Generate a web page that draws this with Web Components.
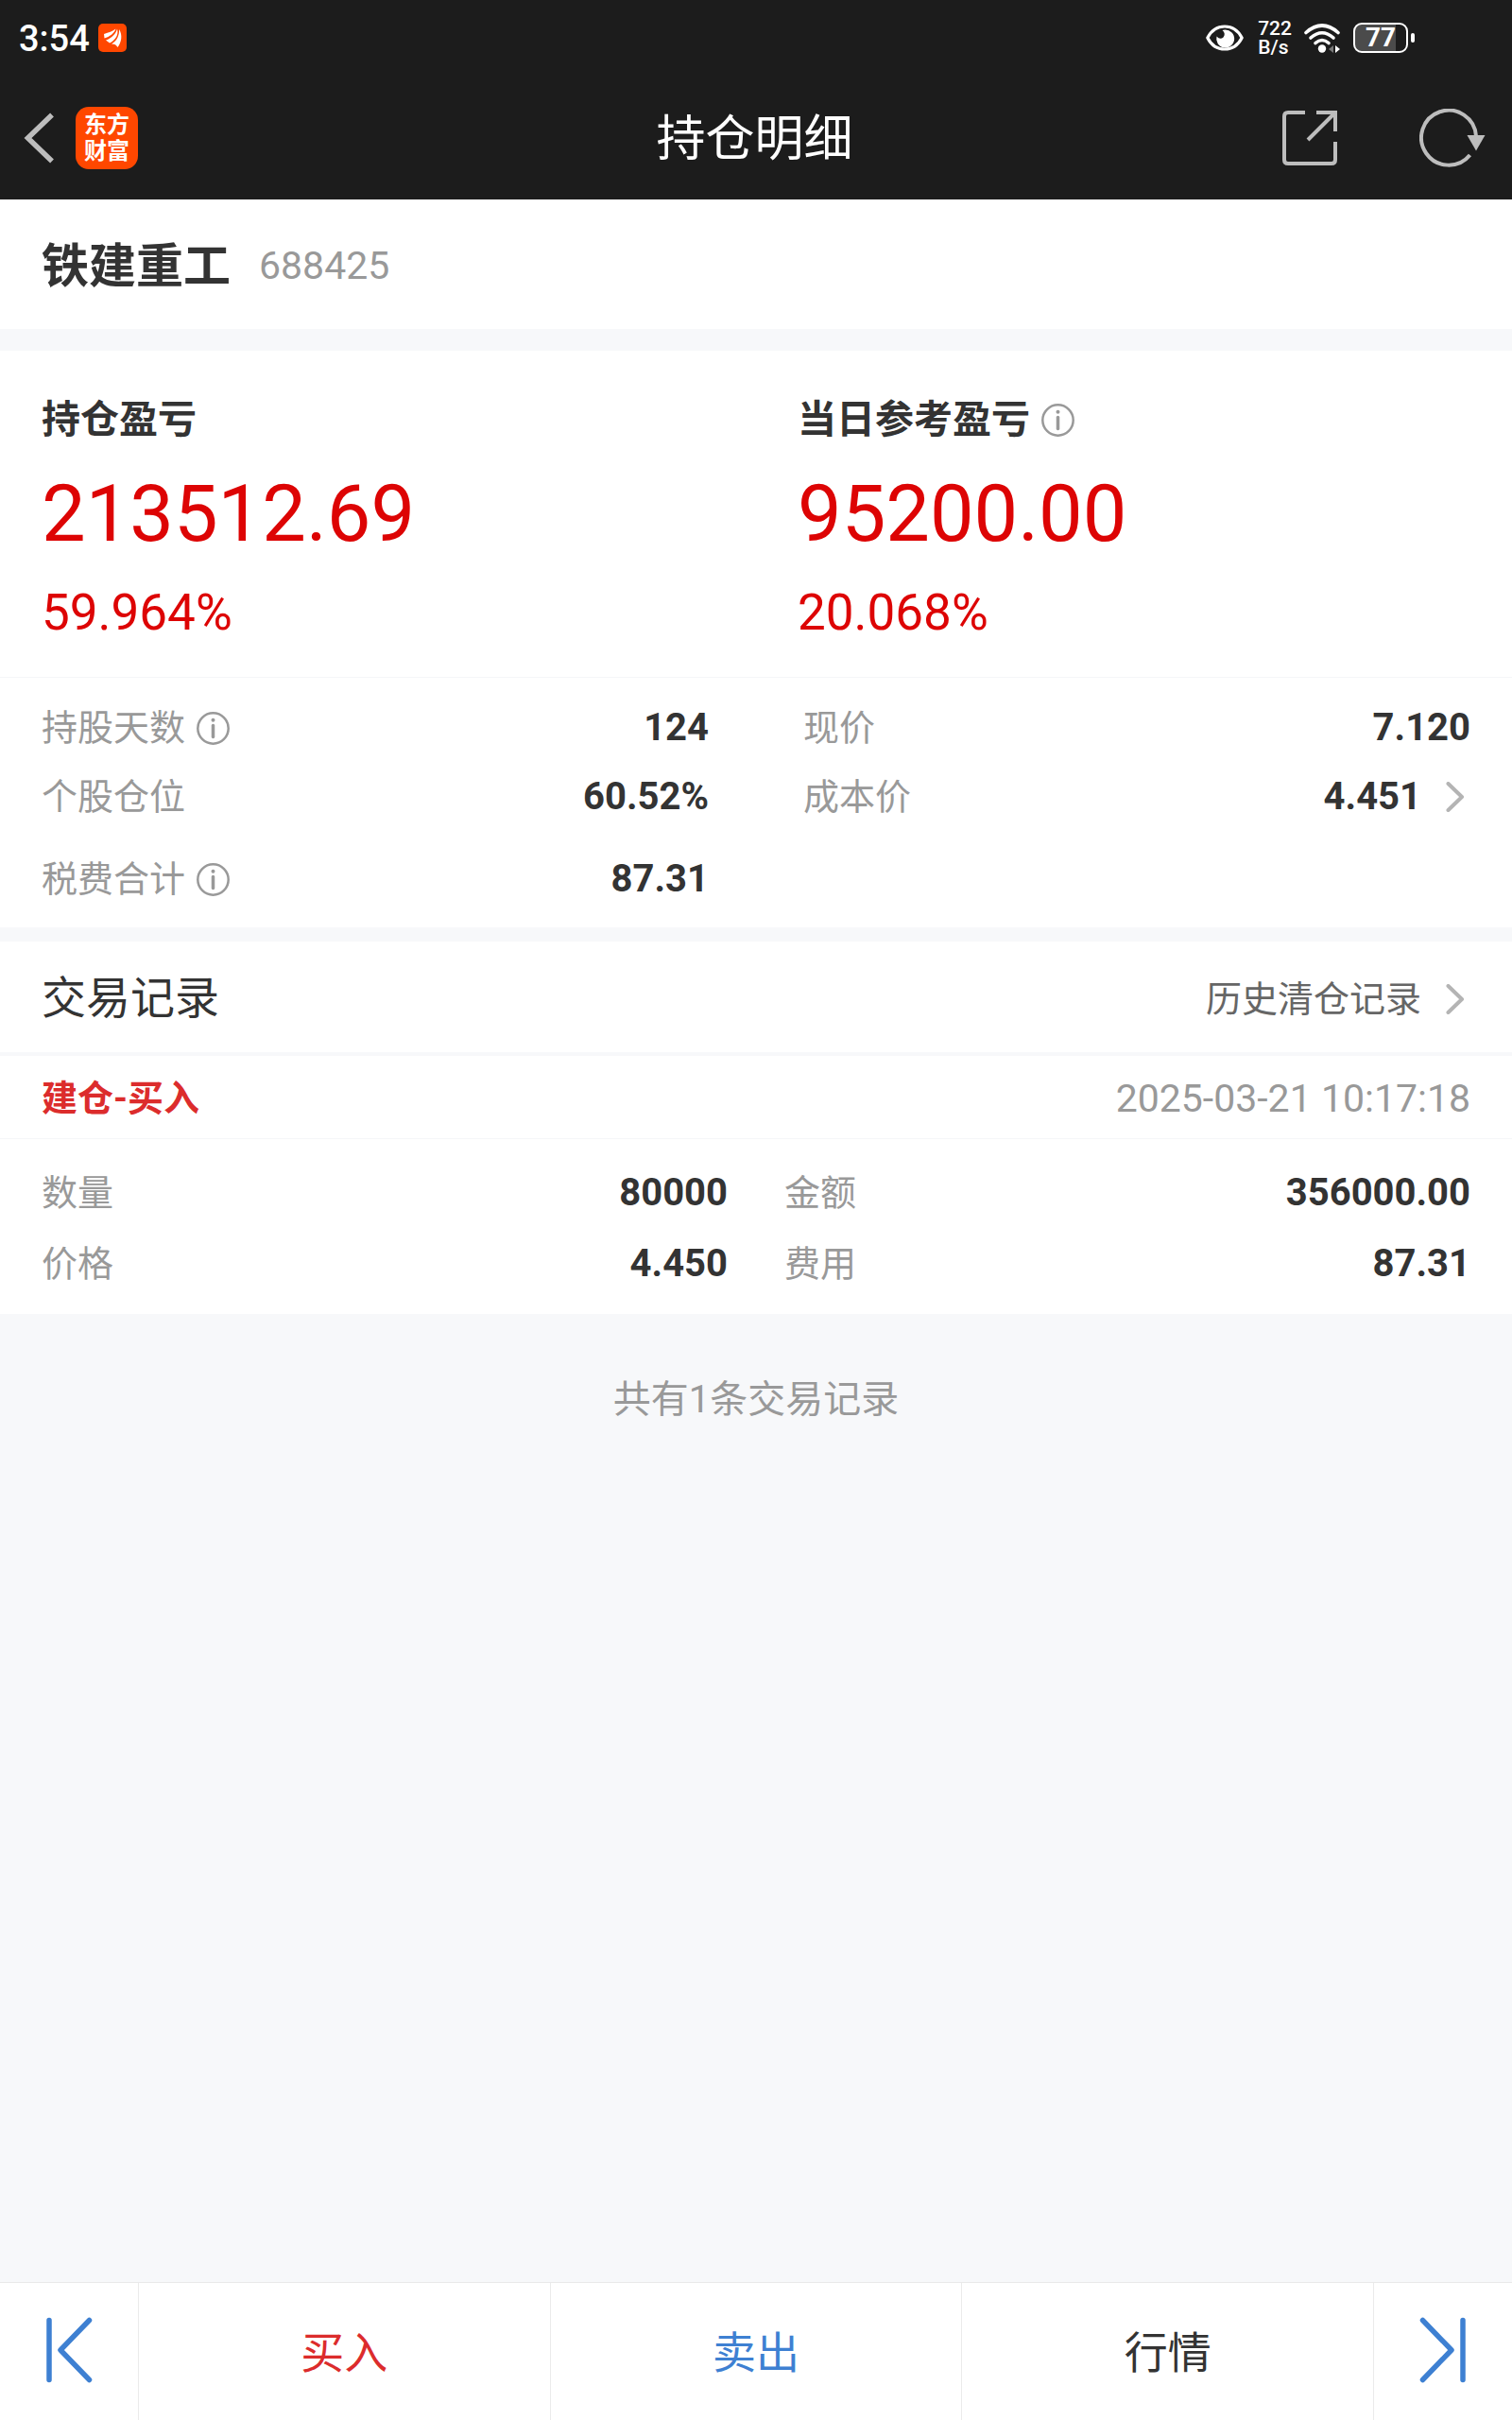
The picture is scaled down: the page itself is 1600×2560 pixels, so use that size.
<!DOCTYPE html>
<html lang="zh-CN">
<head>
<meta charset="utf-8">
<meta name="viewport" content="width=device-width, initial-scale=1">
<title>持仓明细</title>
<style>
  html, body { margin: 0; }
  body {
    --ink: #333; --muted: #999; --up: #dd0404; --buy: #dc2c2c; --blue: #3e80d2;
    --page: #f7f8fa; --rule: #f5f6f8; --gutter: 44px;
    font-family: Roboto, "Noto Sans CJK SC", sans-serif;
    color: var(--ink);
    background: var(--page);
  }
</style>
</head>
<body>
<position-page></position-page>

<template id="status-bar">
  <style>
    :host { display: flex; justify-content: space-between; align-items: center; height: 80px; padding: 0 103px 0 20px; color: #fff; background: #1c1c1c; }
    .group { display: flex; align-items: center; }
    .clock { font-size: 38px; line-height: 44px; font-weight: 500; margin: 2px 9px 0 0; }
    .speed { font-size: 21px; line-height: 20px; font-weight: 500; margin: 0 13px 0 15px; }
    .battery { display: flex; align-items: center; gap: 3px; margin-left: 14px; }
    .cell { box-sizing: border-box; width: 58px; height: 32px; border: 2px solid #fff; border-radius: 9px; text-align: center; font-size: 28px; line-height: 28px; font-weight: 700; background: linear-gradient(90deg, #4b4b4b 80%, transparent 80%); }
    .nub { width: 4px; height: 10px; border-radius: 2px; background: #fff; }
    svg { display: block; }
  </style>
  <div class="group">
    <span class="clock">3:54</span>
    <svg width="30" height="30" viewBox="0 0 30 30" aria-hidden="true">
      <rect width="30" height="30" rx="5" fill="#ff4700"/>
      <g fill="#fff">
        <path d="M6 11C11 9.500 15 8 18.500 5.500C17 10 12 14 6.500 15.500Z"/>
        <path d="M8 17.500C14 15.500 18.500 11 20 5.500C22 12 17.500 18 12 20.500Z"/>
        <path d="M14 21.500C20 18 22.500 12 22 6C26 12 24.500 20 20.500 25C19 22.500 17.500 21.500 14 21.500Z"/>
      </g>
    </svg>
  </div>
  <div class="group">
    <svg width="40" height="28" viewBox="0 0 40 28" aria-hidden="true">
      <path d="M1.800 14C10 -2 30 -2 38.200 14C30 30 10 30 1.800 14Z" fill="none" stroke="#fff" stroke-width="3.200" stroke-linejoin="round"/>
      <path d="M20 5.500A9.500 9.500 0 1 1 11.500 12.500Q15 16.500 18.500 13.500Q21.500 9.500 17.500 6Z" fill="#fff"/>
    </svg>
    <div class="speed"><div>722</div><div>B/s</div></div>
    <svg width="38" height="31" viewBox="0 0 38 31" aria-hidden="true">
      <g fill="none" stroke="#fff" stroke-width="3.600" stroke-linecap="round">
        <path d="M2 9.500Q19 -5.500 36 9.500"/>
        <path d="M7 15Q19 4.500 31 15"/>
        <path d="M12 20.500Q19 14.500 26 20.500"/>
      </g>
      <circle cx="19" cy="26.500" r="4.200" fill="#fff"/>
      <path d="M26 27l5-4v8z" fill="#777"/><path d="M38 27l-5-4v8z" fill="#fff"/>
    </svg>
    <div class="battery"><div class="cell">77</div><div class="nub"></div></div>
  </div>
</template>

<template id="nav-bar">
  <style>
    :host { display: grid; grid-template-columns: 1fr auto 1fr; align-items: center; height: 131px; padding: 0 28px 0 25px; color: #fff; background: #1c1c1c; }
    h1 { margin: 0; padding-top: 4px; font-size: 52px; line-height: 64px; font-weight: 400; }
    .side { display: flex; align-items: center; gap: 22px; }
    .end { justify-content: flex-end; gap: 87px; }
    button { display: block; padding: 0; border: 0; background: none; color: #bdbdbd; }
    svg { display: block; }
    .brand { display: grid; align-content: center; justify-items: center; width: 66px; height: 66px; border-radius: 14px; background: #ff4700; color: #fff; font-size: 24px; line-height: 28px; font-weight: 700; text-decoration: none; }
  </style>
  <div class="side">
    <button type="button" aria-label="返回"><svg width="33" height="54" viewBox="0 0 33 54" fill="none" stroke="currentColor" stroke-width="5.500"><path d="M30 2.500L4.500 27L30 51.500"/></svg></button>
    <a class="brand" href="#"><span>东方</span><span>财富</span></a>
  </div>
  <h1><slot></slot></h1>
  <div class="side end">
    <button type="button" aria-label="分享"><svg width="58" height="58" viewBox="0 0 58 58" fill="none" stroke="currentColor" stroke-width="4"><path d="M24 2H6Q2 2 2 6V52Q2 56 6 56H52Q56 56 56 52V33"/><path d="M36 2H56V22M56 2L27 31"/></svg></button>
    <button type="button" aria-label="刷新"><svg width="70" height="62" viewBox="0 0 70 62" fill="none" stroke="currentColor" stroke-width="4"><path d="M53.500 49A29 29 0 1 1 60 29"/><path d="M50.500 28H69.500L60 44.500Z" fill="currentColor" stroke="none"/></svg></button>
  </div>
</template>

<template id="stock-name">
  <style>
    :host { display: flex; align-items: center; gap: 30px; height: 137px; padding: 0 var(--gutter); background: #fff; }
    h2 { margin: 0; padding-top: 4px; font-size: 50px; line-height: 60px; font-weight: 700; }
    span { padding-top: 2px; font-size: 41px; line-height: 60px; color: var(--muted); }
  </style>
  <h2><slot></slot></h2><span><slot name="code"></slot></span>
</template>

<template id="info-tip">
  <style>
    :host { display: inline-block; flex: none; }
    button { display: block; padding: 0; border: 0; background: none; color: var(--muted); }
    svg { display: block; }
  </style>
  <button type="button" aria-label="说明"><svg width="35" height="35" viewBox="0 0 35 35" fill="none" stroke="currentColor"><circle cx="17.500" cy="17.500" r="16.200" stroke-width="2.500"/><path d="M17.500 14.500V26.500" stroke-width="3.500" stroke-linecap="round"/><circle cx="17.500" cy="8.700" r="2" fill="currentColor" stroke="none"/></svg></button>
</template>

<template id="chevron-right">
  <style>:host { display: block; } svg { display: block; }</style>
  <svg width="26" height="32" viewBox="0 0 26 32" fill="none" stroke="#b4b4b4" stroke-width="4" stroke-linecap="round" stroke-linejoin="round" aria-hidden="true"><path d="M2.500 2L17 16L2.500 30"/></svg>
</template>

<template id="profit-card">
  <style>
    :host { display: flex; flex: 1; flex-direction: column; gap: 24px; padding-left: var(--gutter); }
    .title { display: flex; align-items: center; gap: 12px; }
    h3 { margin: 0; font-size: 41px; line-height: 56px; font-weight: 700; }
    .amount { font-size: 83px; line-height: 96px; color: var(--up); }
    .rate { font-size: 53px; line-height: 64px; color: var(--up); }
  </style>
  <div class="title"><h3><slot></slot></h3><slot name="tip"></slot></div>
  <div class="amount"><slot name="amount"></slot></div>
  <div class="rate"><slot name="rate"></slot></div>
</template>

<template id="data-field">
  <style>
    :host { display: flex; justify-content: space-between; align-items: center; min-height: 56px; }
    .label { display: flex; align-items: center; gap: 12px; font-size: 38px; line-height: 56px; color: var(--muted); }
    .value { font-size: 40px; line-height: 56px; font-weight: 700; }
    ::slotted(a) { display: flex; align-items: center; gap: 26px; color: inherit; text-decoration: none; }
  </style>
  <div class="label"><slot name="label"></slot></div>
  <div class="value"><slot></slot></div>
</template>

<template id="action-bar">
  <style>
    :host { display: grid; grid-template-columns: 146px 1fr 1fr 1fr 147px; height: 145px; border-top: 1px solid #e9e9e9; background: #fff; }
    button { display: grid; place-items: center; padding: 2px 0 0; border: 0; border-left: 1px solid #ebebeb; background: none; font: inherit; font-size: 46px; line-height: 60px; color: var(--ink); }
    button:first-of-type { border-left: 0; }
    .buy { color: var(--buy); }
    .sell, .step { color: var(--blue); }
    .step { padding: 0 0 4px; }
    svg { display: block; }
  </style>
  <button class="step" type="button" aria-label="上一个"><svg width="49" height="70" viewBox="0 0 49 70" fill="none" stroke="currentColor" stroke-width="5.500" stroke-linecap="round" stroke-linejoin="round"><path d="M3 3.500V66.500M45.500 3.500L15 35L45.500 66.500"/></svg></button>
  <button class="buy" type="button">买入</button>
  <button class="sell" type="button">卖出</button>
  <button type="button">行情</button>
  <button class="step" type="button" aria-label="下一个"><svg width="49" height="70" viewBox="0 0 49 70" fill="none" stroke="currentColor" stroke-width="5.500" stroke-linecap="round" stroke-linejoin="round"><path d="M46 3.500V66.500M3.500 3.500L34 35L3.500 66.500"/></svg></button>
</template>

<template id="trade-record">
  <style>
    :host { display: block; background: #fff; }
    header { display: flex; justify-content: space-between; align-items: center; height: 87px; padding: 0 var(--gutter); border-bottom: 1px solid var(--rule); }
    h4 { margin: 0; padding-top: 2px; font-size: 38px; line-height: 56px; font-weight: 700; color: var(--buy); }
    time { padding-top: 2px; font-size: 41px; line-height: 56px; color: var(--muted); }
    .fields { display: grid; grid-template-columns: 1fr 1fr; gap: 19px 60px; padding: 29px var(--gutter) 25px; }
  </style>
  <header><h4><slot name="kind"></slot></h4><time><slot name="time"></slot></time></header>
  <div class="fields"><slot></slot></div>
</template>

<template id="position-page">
  <style>
    :host { display: flex; flex-direction: column; min-height: 100vh; }
    .profit { display: flex; margin-top: 23px; padding: 45px 0 36px; background: #fff; border-bottom: 1px solid var(--rule); }
    .details { display: grid; gap: 31px; padding: 25px var(--gutter) 23px; background: #fff; }
    .pairs { display: grid; grid-template-columns: 1fr 1fr; gap: 17px 100px; }
    .heading { display: flex; justify-content: space-between; align-items: center; height: 117px; margin-top: 15px; padding: 0 var(--gutter); background: #fff; border-bottom: 4px solid var(--page); }
    h3 { margin: 0; padding-top: 3px; font-size: 47px; line-height: 60px; font-weight: 400; }
    .heading a { display: flex; align-items: center; gap: 26px; padding-top: 5px; font-size: 38px; line-height: 56px; color: #666; text-decoration: none; }
    .total { margin: 61px 0; text-align: center; font-size: 40px; line-height: 60px; color: var(--muted); }
    action-bar { margin-top: auto; }
  </style>
  <status-bar></status-bar>
  <nav-bar>持仓明细</nav-bar>
  <stock-name>铁建重工<span slot="code">688425</span></stock-name>
  <section class="profit">
    <profit-card>持仓盈亏<span slot="amount">213512.69</span><span slot="rate">59.964%</span></profit-card>
    <profit-card>当日参考盈亏<info-tip slot="tip"></info-tip><span slot="amount">95200.00</span><span slot="rate">20.068%</span></profit-card>
  </section>
  <section class="details">
    <div class="pairs">
      <data-field><span slot="label">持股天数</span><info-tip slot="label"></info-tip>124</data-field>
      <data-field><span slot="label">现价</span>7.120</data-field>
      <data-field><span slot="label">个股仓位</span>60.52%</data-field>
      <data-field><span slot="label">成本价</span><a href="#">4.451<chevron-right></chevron-right></a></data-field>
    </div>
    <div class="pairs">
      <data-field><span slot="label">税费合计</span><info-tip slot="label"></info-tip>87.31</data-field>
    </div>
  </section>
  <div class="heading"><h3>交易记录</h3><a href="#">历史清仓记录<chevron-right></chevron-right></a></div>
  <trade-record>
    <span slot="kind">建仓-买入</span><span slot="time">2025-03-21 10:17:18</span>
    <data-field><span slot="label">数量</span>80000</data-field>
    <data-field><span slot="label">金额</span>356000.00</data-field>
    <data-field><span slot="label">价格</span>4.450</data-field>
    <data-field><span slot="label">费用</span>87.31</data-field>
  </trade-record>
  <p class="total">共有1条交易记录</p>
  <action-bar></action-bar>
</template>

<script>
  class TemplateElement extends HTMLElement {
    constructor() {
      super();
      const template = document.getElementById(this.localName);
      this.attachShadow({ mode: "open" }).append(document.importNode(template.content, true));
    }
  }
  for (const name of ["status-bar", "nav-bar", "stock-name", "info-tip", "chevron-right", "profit-card", "data-field", "action-bar", "trade-record", "position-page"]) {
    customElements.define(name, class extends TemplateElement {});
  }
</script>
</body>
</html>
